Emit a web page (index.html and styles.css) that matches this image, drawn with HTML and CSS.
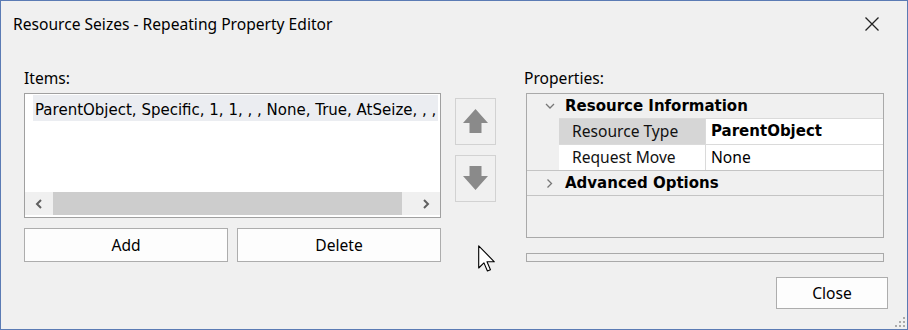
FILE: index.html
```html
<!DOCTYPE html>
<html lang="en">
<head>
<meta charset="UTF-8">
<title>Resource Seizes - Repeating Property Editor</title>
<link rel="stylesheet" href="styles.css">
</head>
<body>
    <div class="window">
        <!-- Title bar -->
        <div class="titlebar">
            <span class="title">Resource Seizes - Repeating Property Editor</span>
            <svg class="close-x" width="16" height="16" viewBox="0 0 16 16">
                <path d="M1.5 1.5 L14.5 14.5 M14.5 1.5 L1.5 14.5" stroke="#222" stroke-width="1.3" fill="none"/>
            </svg>
        </div>

        <div class="content">
            <!-- Items list -->
            <div class="col-items">
                <div class="label">Items:</div>
                <div class="listbox">
                    <div class="list-items">
                        <div class="list-item">ParentObject, Specific, 1, 1, , , None, True, AtSeize, , ,</div>
                    </div>
                    <div class="hscroll">
                        <div class="sb-btn">
                            <svg width="8" height="10" viewBox="0 0 8 10"><path d="M6 1 L2 5 L6 9" stroke="#606060" stroke-width="2" fill="none"/></svg>
                        </div>
                        <div class="sb-track"><div class="sb-thumb"></div></div>
                        <div class="sb-btn">
                            <svg width="8" height="10" viewBox="0 0 8 10"><path d="M2 1 L6 5 L2 9" stroke="#606060" stroke-width="2" fill="none"/></svg>
                        </div>
                    </div>
                </div>
                <div class="list-buttons">
                    <button class="btn">Add</button>
                    <button class="btn">Delete</button>
                </div>
            </div>

            <!-- Move up / down -->
            <div class="col-move">
                <button class="move-btn">
                    <svg width="39" height="45" viewBox="0 0 39 45"><polygon points="19.5,10 32,24 25.5,24 25.5,34 13.5,34 13.5,24 7,24" fill="#8a8a8a"/></svg>
                </button>
                <button class="move-btn">
                    <svg width="39" height="45" viewBox="0 0 39 45"><polygon points="13.5,10 25.5,10 25.5,20 32,20 19.5,34 7,20 13.5,20" fill="#8a8a8a"/></svg>
                </button>
            </div>

            <!-- Property grid -->
            <div class="col-props">
                <div class="label props-label">Properties:</div>
                <div class="propgrid">
                    <div class="cat">
                        <svg width="10" height="10" viewBox="0 0 10 10"><path d="M1 3 L5 7 L9 3" stroke="#777" stroke-width="1.3" fill="none"/></svg>
                        <span>Resource Information</span>
                    </div>
                    <div class="prop-row selected">
                        <div class="prop-name">Resource Type</div>
                        <div class="prop-value bold">ParentObject</div>
                    </div>
                    <div class="prop-row">
                        <div class="prop-name">Request Move</div>
                        <div class="prop-value">None</div>
                    </div>
                    <div class="cat collapsed">
                        <svg width="10" height="10" viewBox="0 0 10 10"><path d="M2.5 1.5 L6.5 5.5 L2.5 9.5" stroke="#777" stroke-width="1.3" fill="none"/></svg>
                        <span>Advanced Options</span>
                    </div>
                </div>
                <div class="helpbar"></div>
                <div class="footer">
                    <button class="btn close-btn">Close</button>
                </div>
            </div>
        </div>

        <!-- Resize grip -->
        <svg class="grip" width="12" height="12" viewBox="0 0 12 12">
            <rect x="9" y="1" width="2" height="2" fill="#aaa"/>
            <rect x="9" y="5" width="2" height="2" fill="#aaa"/>
            <rect x="5" y="5" width="2" height="2" fill="#aaa"/>
            <rect x="9" y="9" width="2" height="2" fill="#aaa"/>
            <rect x="5" y="9" width="2" height="2" fill="#aaa"/>
            <rect x="1" y="9" width="2" height="2" fill="#aaa"/>
        </svg>

        <!-- Mouse pointer -->
        <svg class="cursor" width="18" height="28" viewBox="0 0 13 20">
            <path d="M0.5 0.5 L0.5 16.5 L4.3 12.8 L6.8 18.6 L9 17.7 L6.5 12 L11.8 12 Z" fill="#fff" stroke="#000" stroke-width="0.8" stroke-linejoin="round"/>
        </svg>
    </div>
</body>
</html>
```

FILE: styles.css
```css
/* General */
* {
    box-sizing: border-box;
}

body {
    margin: 0;
    font-family: "Noto Sans", sans-serif;
    font-size: 15.6px;
    color: #000;
    background: #f0f0f0;
}

.window {
    position: relative;
    width: 908px;
    height: 330px;
    border: 1px solid #5b7bb4;
    background: #f0f0f0;
    overflow: hidden;
}

/* Title bar */
.titlebar {
    height: 47px;
    display: flex;
    align-items: center;
    justify-content: space-between;
    padding: 0 27px 2px 12px;
}

.title {
    line-height: 22px;
}

/* Layout */
.content {
    display: flex;
    padding: 19px 0 0 23px;
}

.label {
    height: 22px;
    line-height: 22px;
}

.props-label {
    margin-left: -2px;
}

/* Items list */
.col-items {
    width: 417px;
}

.listbox {
    margin-top: 4px;
    height: 125px;
    border: 1px solid #a0a0a0;
    background: #fff;
    display: flex;
    flex-direction: column;
}

.list-items {
    flex: 1;
    padding-top: 1px;
    overflow: hidden;
}

.list-item {
    margin: 0 2px 0 8px;
    padding: 5px 0 1px 2px;
    font-family: "DejaVu Sans", sans-serif;
    font-size: 15px;
    line-height: 20px;
    background: #ebedf1;
    white-space: nowrap;
    overflow: hidden;
}

.hscroll {
    height: 23px;
    margin-bottom: 2px;
    display: flex;
    background: #f0f0f0;
}

.sb-btn {
    width: 28px;
    display: flex;
    align-items: center;
    justify-content: center;
}

.sb-track {
    flex: 1;
}

.sb-thumb {
    width: 349px;
    height: 100%;
    background: #cdcdcd;
}

.list-buttons {
    display: flex;
    gap: 9px;
    margin-top: 10px;
}

.btn {
    height: 34px;
    padding: 0;
    border: 1px solid #adadad;
    background: #fdfdfd;
    font: inherit;
    color: #000;
}

.list-buttons .btn {
    flex: 1;
}

/* Move buttons */
.col-move {
    width: 41px;
    margin-left: 14px;
    padding-top: 31px;
    display: flex;
    flex-direction: column;
    gap: 10px;
}

.move-btn {
    display: block;
    width: 41px;
    height: 47px;
    padding: 0;
    border: 1px solid #d2d2d2;
    background: #f0f0f0;
}

.move-btn svg {
    display: block;
}

/* Property grid */
.col-props {
    width: 358px;
    margin-left: 30px;
}

.propgrid {
    margin-top: 4px;
    height: 145px;
    border: 1px solid #a9a9a9;
    background: #f0f0f0;
}

.cat {
    height: 24px;
    display: flex;
    align-items: center;
    gap: 10px;
    padding-left: 18px;
    font-family: "DejaVu Sans", sans-serif;
    font-weight: bold;
    font-size: 15px;
    line-height: 20px;
}

.cat.collapsed {
    height: 26px;
    border-top: 1px solid #c4c4c4;
    border-bottom: 1px solid #c4c4c4;
}

.prop-row {
    display: flex;
    height: 26px;
    margin-left: 32px;
    border-top: 1px solid #dadada;
}

.prop-name {
    width: 146px;
    padding-left: 13px;
    line-height: 25px;
    background: #fff;
    color: #111;
}

.prop-row.selected .prop-name {
    background: #d6d6d6;
}

.prop-value {
    flex: 1;
    padding-left: 5px;
    line-height: 25px;
    border-left: 1px solid #dadada;
    background: #fff;
}

.prop-value.bold {
    font-family: "DejaVu Sans", sans-serif;
    font-weight: bold;
    font-size: 15px;
}

.helpbar {
    margin-top: 15px;
    height: 9px;
    border: 1px solid #a9a9a9;
    background: #f0f0f0;
}

.footer {
    display: flex;
    justify-content: flex-end;
    margin-top: 15px;
    margin-right: -4px;
}

.close-btn {
    width: 112px;
    height: 32px;
}

/* Overlays */
.grip {
    position: absolute;
    right: 1px;
    bottom: 1px;
}

.cursor {
    position: absolute;
    left: 477px;
    top: 244px;
}
```
